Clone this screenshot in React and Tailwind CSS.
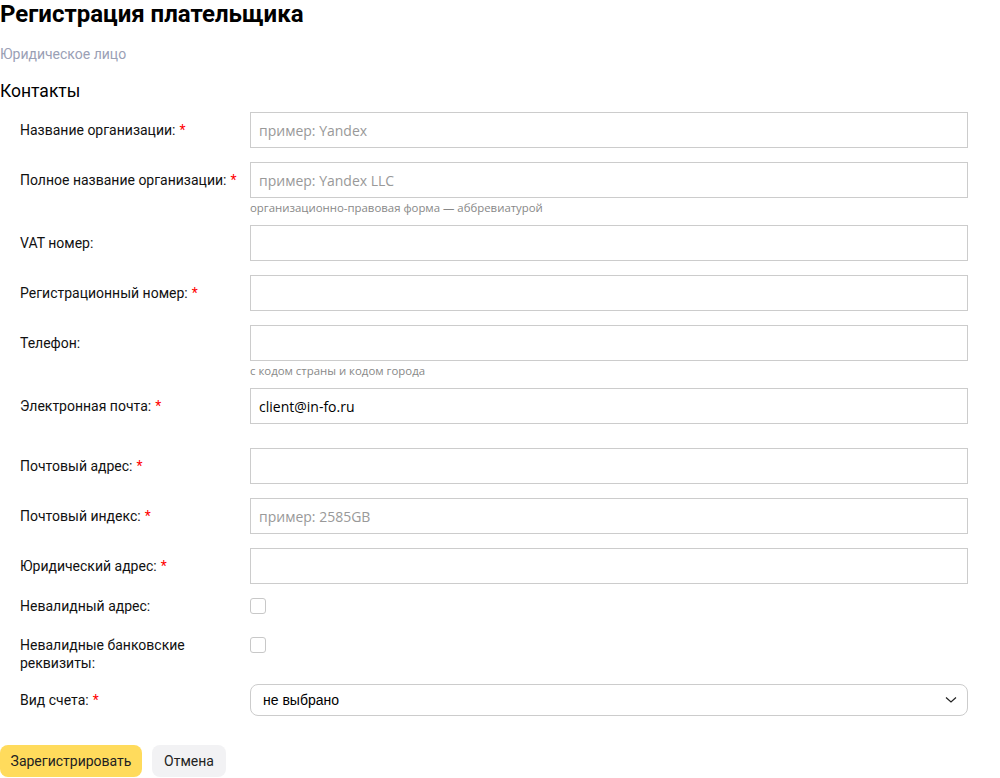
import React from "react";

const Req = () => <span className="text-[#ff0000] ml-1">*</span>;

const Row = ({label, required, children, className = "mb-[14px]"}) => (
    <div className={`flex items-start ${className}`}>
        <div className="w-[250px] pl-5 pt-[9px] text-[14px] leading-[18px] text-[#111]">
            {label}{required && <Req/>}
        </div>
        <div className="flex-1">{children}</div>
    </div>
);

const Input = ({placeholder, value}) => (
    <input
        className="block w-full h-9 border border-[#cccccc] px-2 text-[14px] text-black placeholder:text-[#999999] outline-none"
        style={{fontFamily: "'Open Sans', sans-serif"}}
        placeholder={placeholder}
        defaultValue={value}
    />
);

const Hint = ({children}) => (
    <div className="mt-[3px] text-[11.4px] leading-[14px] text-[#888888]"
         style={{fontFamily: "'Open Sans', sans-serif"}}>{children}</div>
);

const Check = () => (
    <div className="w-4 h-4 mt-[1px] rounded-[3px] border border-[#c8c8c8] bg-white"/>
);

export default function App() {
    return (
        <div className="w-[968px] bg-white text-black" style={{fontFamily: "Roboto, 'Liberation Sans', sans-serif"}}>
            <h1 className="text-[24px] font-bold leading-[28px]">Регистрация плательщика</h1>
            <div className="mt-[17px] text-[14px] leading-[18px] text-[#9aa0b5]">Юридическое лицо</div>
            <h2 className="mt-[16px] text-[17.5px] leading-[24px]">Контакты</h2>

            <div className="mt-[9px]">
                <Row label="Название организации:" required>
                    <Input placeholder="пример: Yandex"/>
                </Row>
                <Row label="Полное название организации:" required className="mb-[10px]">
                    <Input placeholder="пример: Yandex LLC"/>
                    <Hint>организационно-правовая форма — аббревиатурой</Hint>
                </Row>
                <Row label="VAT номер:">
                    <Input/>
                </Row>
                <Row label="Регистрационный номер:" required>
                    <Input/>
                </Row>
                <Row label="Телефон:" className="mb-[10px]">
                    <Input/>
                    <Hint>с кодом страны и кодом города</Hint>
                </Row>
                <Row label="Электронная почта:" required className="mb-[24px]">
                    <Input value="client@in-fo.ru"/>
                </Row>
                <Row label="Почтовый адрес:" required>
                    <Input/>
                </Row>
                <Row label="Почтовый индекс:" required>
                    <Input placeholder="пример: 2585GB"/>
                </Row>
                <Row label="Юридический адрес:" required className="mb-[13px]">
                    <Input/>
                </Row>

                <div className="flex items-start mb-[21px]">
                    <div className="w-[250px] pl-5 text-[14px] leading-[18px] text-[#111]">Невалидный адрес:</div>
                    <Check/>
                </div>
                <div className="flex items-start mb-[12px]">
                    <div className="w-[250px] pl-5 text-[14px] leading-[18px] text-[#111]">Невалидные банковские<br/>реквизиты:</div>
                    <Check/>
                </div>

                <div className="flex items-center">
                    <div className="w-[250px] pl-5 text-[14px] leading-[18px] text-[#111]">Вид счета:<Req/></div>
                    <div className="flex-1 h-8 flex items-center justify-between rounded-lg border border-[#cccccc] pl-3 pr-[10px]"
                         style={{fontFamily: "'Liberation Sans', Arial, sans-serif"}}>
                        <span className="text-[14px] text-black">не выбрано</span>
                        <svg width="12" height="8" viewBox="0 0 12 8" fill="none">
                            <path d="M1 1.5 L6 6 L11 1.5" stroke="#222" strokeWidth="1.2"/>
                        </svg>
                    </div>
                </div>
            </div>

            <div className="mt-[29px] flex gap-[10px]">
                <button className="h-8 w-[142px] rounded-lg bg-[#ffdb5c] text-[14px] text-[#222]">Зарегистрировать</button>
                <button className="h-8 w-[74px] rounded-lg bg-[#f2f2f4] text-[14px] text-[#222]">Отмена</button>
            </div>
        </div>
    );
}
